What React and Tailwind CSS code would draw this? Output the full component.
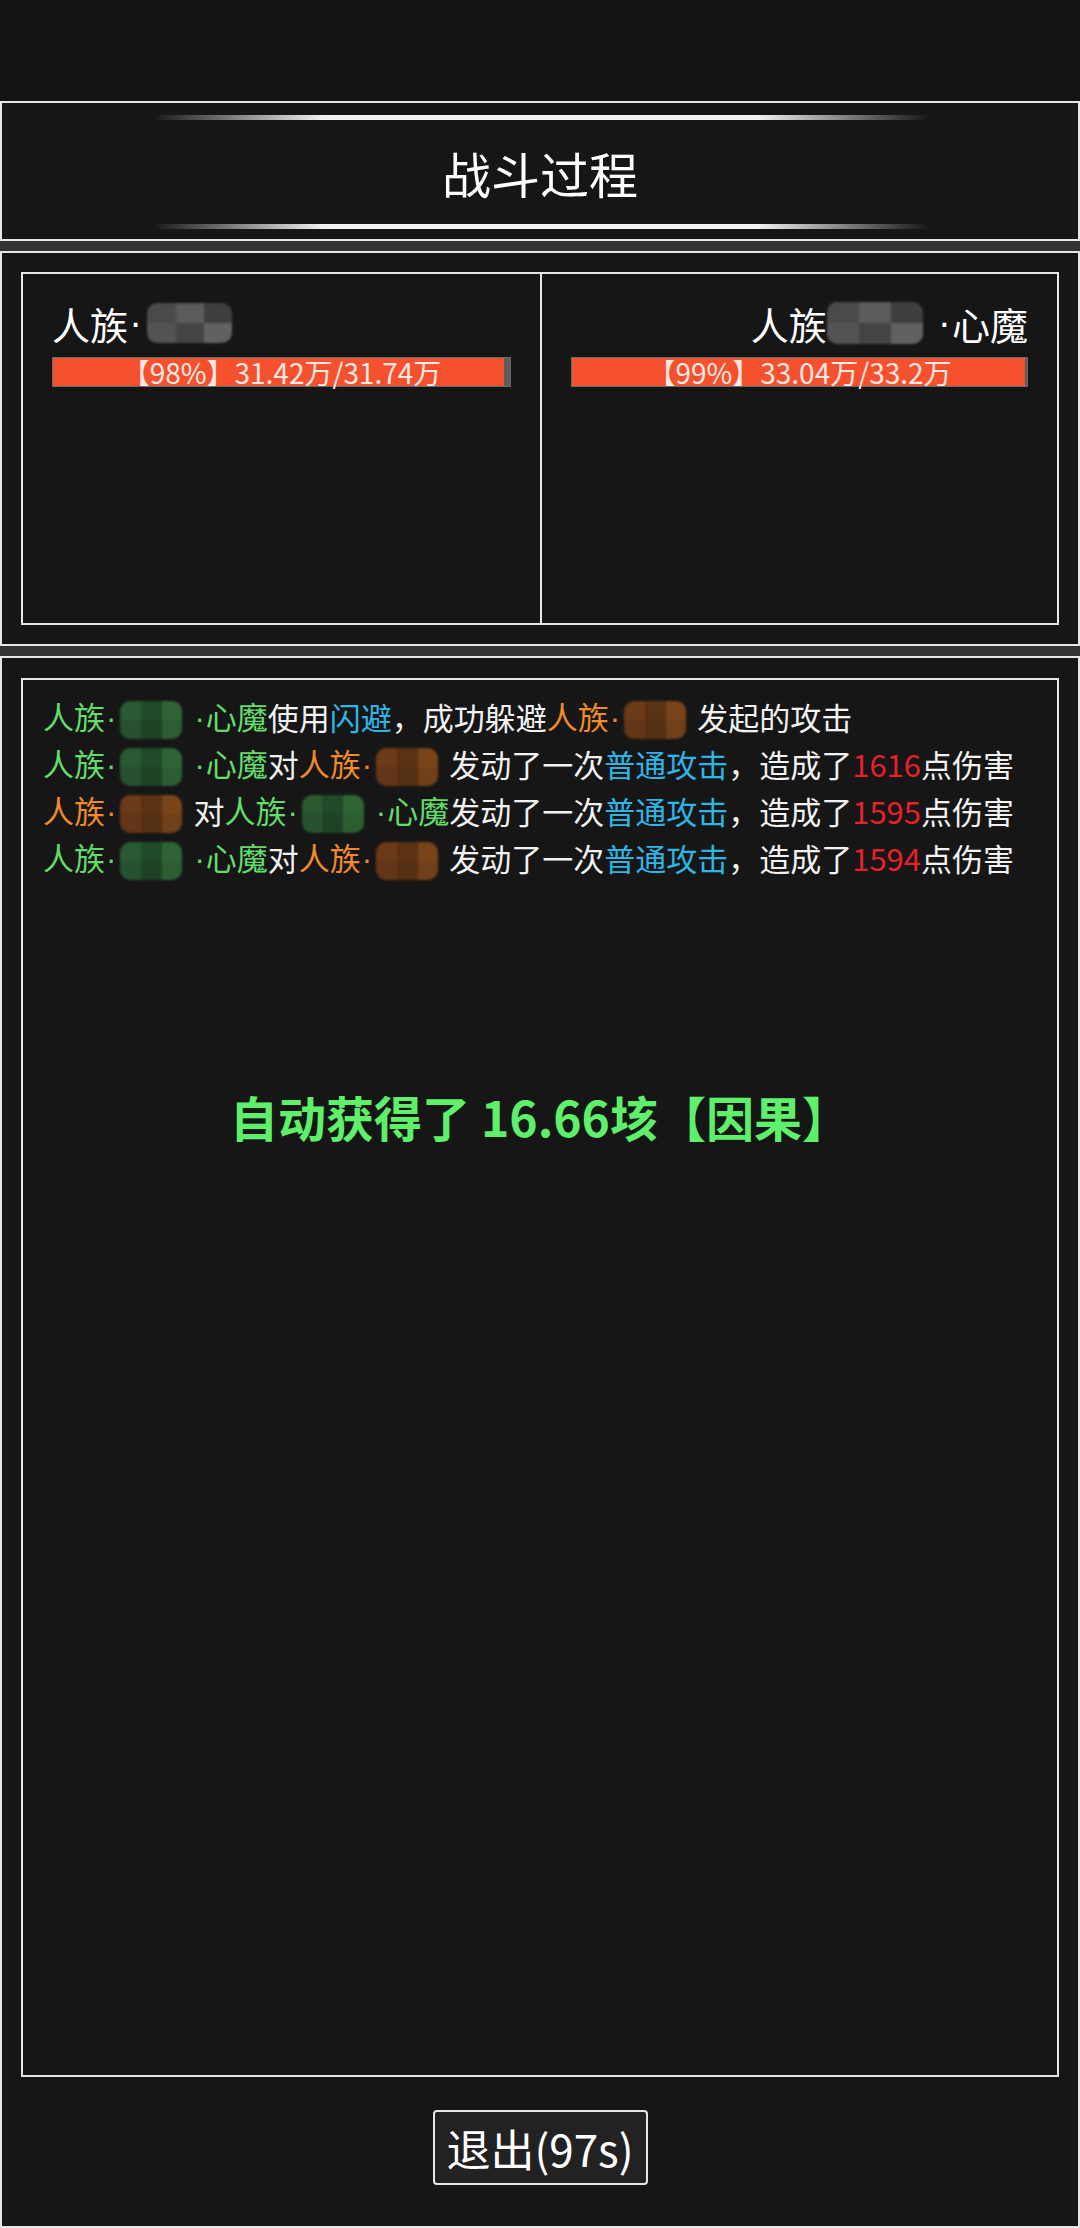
const TONES = {
  gray: ['bg-[#4a4a4a]', 'bg-[#5b5b5b]', 'bg-[#3f3f3f]', 'bg-[#535353]', 'bg-[#444444]', 'bg-[#616161]'],
  green: ['bg-[#2a5a2f]', 'bg-[#22492a]', 'bg-[#2f6535]', 'bg-[#265230]', 'bg-[#1f4226]', 'bg-[#2c5e32]'],
  brown: ['bg-[#6b3a17]', 'bg-[#5a3214]', 'bg-[#7a4419]', 'bg-[#633615]', 'bg-[#553012]', 'bg-[#70401a]'],
};

// pixelated name cover
const Mosaic = ({ w = 'w-[62px]', tone = 'gray', h = 'h-[38px]', m = 'ml-[3px] mr-[11px]' }) => (
  <span className={`inline-grid grid-cols-3 grid-rows-2 overflow-hidden rounded-[10px] align-middle blur-[1px] ${w} ${h} ${m}`}>
    {TONES[tone].map((c, i) => (
      <span key={i} className={c} />
    ))}
  </span>
);

const Dot = () => <span className="inline-block w-[0.4em] text-center font-['Liberation_Sans',sans-serif]">·</span>;

const G = ({ children }) => <span className="text-[#62dc6a]">{children}</span>;
const O = ({ children }) => <span className="text-[#f08a2a]">{children}</span>;
const B = ({ children }) => <span className="text-[#2fb4e4]">{children}</span>;
const R = ({ children }) => <span className="text-[#e8202a]">{children}</span>;

const Line = ({ children }) => <div className="flex h-[47px] items-center">{children}</div>;

const Glow = () => (
  <div className="mx-auto h-[5px] w-[777px] rounded-full bg-[linear-gradient(90deg,transparent,#f2f2f2_22%,#f2f2f2_78%,transparent)] blur-[0.6px]" />
);

const HpBar = ({ pct, text }) => (
  <div
    className="flex h-[30px] items-center justify-center border border-[#6a6a6a] text-[28px] leading-none text-[#fbe9e4]"
    style={{ background: `linear-gradient(90deg,#f5512f ${pct}%,#5c5c5c ${pct}%)` }}
  >
    {text}
  </div>
);

const Fighter = ({ name, hp, pct, right }) => (
  <div className={`flex flex-col px-[29px] pt-[24px] ${right ? 'border-l-2 border-[#e6e6e6]' : ''}`}>
    <div className={`flex h-[50px] items-center text-[38px] whitespace-nowrap text-white ${right ? 'justify-end' : ''}`}>
      {name}
    </div>
    <div className="mt-[9px]">
      <HpBar pct={pct} text={hp} />
    </div>
  </div>
);

export default function App() {
  return (
    <div className="flex min-h-screen flex-col bg-[#131313] font-['Noto_Sans_CJK_SC',sans-serif] text-white">
      <div className="h-[101px] shrink-0" />

      <div className="flex h-[140px] shrink-0 flex-col justify-between border-2 border-[#e6e6e6] bg-[#161616] pt-[12px] pb-[10px]">
        <Glow />
        <h1 className="text-center text-[49px] leading-none text-white">战斗过程</h1>
        <Glow />
      </div>

      <div className="h-[10px] shrink-0 bg-[#343434]" />

      <div className="h-[395px] shrink-0 border-2 border-[#e6e6e6] bg-[#161616] px-[19px] pt-[19px]">
        <div className="grid h-[353px] grid-cols-2 border-2 border-[#e6e6e6]">
          <Fighter
            name={
              <>
                人族<Dot />
                <Mosaic w="w-[85px]" h="h-[40px]" m="ml-[4px]" />
              </>
            }
            hp="【98%】31.42万/31.74万"
            pct={98.6}
          />
          <Fighter
            right
            name={
              <>
                人族<Mosaic w="w-[96px]" m="mr-[14px]" h="h-[42px]" />
                <Dot />心魔
              </>
            }
            hp="【99%】33.04万/33.2万"
            pct={99.5}
          />
        </div>
      </div>

      <div className="h-[10px] shrink-0 bg-[#343434]" />

      <div className="flex flex-1 flex-col items-center border-2 border-[#e6e6e6] bg-[#161616] px-[19px] pt-[20px] pb-[41px]">
        <div className="flex w-full flex-1 flex-col border-2 border-[#e6e6e6] px-[20px] pt-[13px]">
          <div className="text-[31px] leading-[47px] whitespace-nowrap text-[#f2f2f2]">
            <Line>
              <G>人族<Dot /><Mosaic tone="green" /><Dot />心魔</G>使用<B>闪避</B>，成功躲避<O>人族<Dot /><Mosaic tone="brown" /></O>发起的攻击
            </Line>
            <Line>
              <G>人族<Dot /><Mosaic tone="green" /><Dot />心魔</G>对<O>人族<Dot /><Mosaic tone="brown" /></O>发动了一次<B>普通攻击</B>，造成了<R>1616</R>点伤害
            </Line>
            <Line>
              <O>人族<Dot /><Mosaic tone="brown" /></O>对<G>人族<Dot /><Mosaic tone="green" /><Dot />心魔</G>发动了一次<B>普通攻击</B>，造成了<R>1595</R>点伤害
            </Line>
            <Line>
              <G>人族<Dot /><Mosaic tone="green" /><Dot />心魔</G>对<O>人族<Dot /><Mosaic tone="brown" /></O>发动了一次<B>普通攻击</B>，造成了<R>1594</R>点伤害
            </Line>
          </div>

          <p className="mt-[203px] text-center text-[48px] leading-[64px] font-bold text-[#5ef06a]">
            自动获得了 16.66垓【因果】
          </p>
        </div>

        <button className="mt-[33px] flex h-[75px] w-[215px] items-center justify-center rounded-[4px] border-2 border-[#e6e6e6] bg-[#222222] text-[44px] leading-none text-white">
          退出(97s)
        </button>
      </div>
    </div>
  );
}
